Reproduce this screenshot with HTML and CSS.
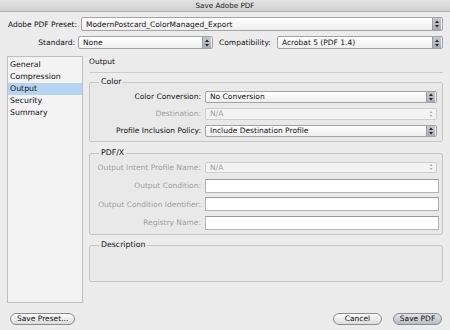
FILE: index.html
```
<!DOCTYPE html>
<html>
<head>
    <title>Save Adobe PDF</title>
    <link rel="stylesheet" href="styles.css">
</head>
<body>
    <div class="titlebar">Save Adobe PDF</div>

    <div class="top">
        <div class="top-row">
            <span class="top-label preset-label">Adobe PDF Preset:</span>
            <div class="popup popup-top grow">
                <span class="popup-text">ModernPostcard_ColorManaged_Export</span>
                <span class="stepper"><svg width="8" height="10" viewBox="0 0 8 10"><path d="M2 4 L4 1.5 L6 4 Z M2 6 L4 8.5 L6 6 Z" fill="#222"/></svg></span>
            </div>
        </div>
        <div class="top-row second">
            <span class="top-label std-label">Standard:</span>
            <div class="popup popup-top std">
                <span class="popup-text">None</span>
                <span class="stepper"><svg width="8" height="10" viewBox="0 0 8 10"><path d="M2 4 L4 1.5 L6 4 Z M2 6 L4 8.5 L6 6 Z" fill="#222"/></svg></span>
            </div>
            <span class="top-label compat-label">Compatibility:</span>
            <div class="popup popup-top grow">
                <span class="popup-text">Acrobat 5 (PDF 1.4)</span>
                <span class="stepper"><svg width="8" height="10" viewBox="0 0 8 10"><path d="M2 4 L4 1.5 L6 4 Z M2 6 L4 8.5 L6 6 Z" fill="#222"/></svg></span>
            </div>
        </div>
    </div>

    <div class="panes">
        <ul class="sidebar">
            <li>General</li>
            <li>Compression</li>
            <li class="selected">Output</li>
            <li>Security</li>
            <li>Summary</li>
        </ul>

        <div class="main">
            <div class="main-title">Output</div>

            <fieldset class="group group-color">
                <legend>Color</legend>
                <div class="field">
                    <span class="field-label">Color Conversion:</span>
                    <div class="popup">
                        <span class="popup-text">No Conversion</span>
                        <span class="stepper"><svg width="8" height="10" viewBox="0 0 8 10"><path d="M2 4 L4 1.5 L6 4 Z M2 6 L4 8.5 L6 6 Z" fill="#222"/></svg></span>
                    </div>
                </div>
                <div class="field disabled">
                    <span class="field-label">Destination:</span>
                    <div class="popup">
                        <span class="popup-text">N/A</span>
                        <span class="stepper"><svg width="8" height="10" viewBox="0 0 8 10"><path d="M2.5 4 L4 2 L5.5 4 Z M2.5 6 L4 8 L5.5 6 Z" fill="#aaa"/></svg></span>
                    </div>
                </div>
                <div class="field">
                    <span class="field-label">Profile Inclusion Policy:</span>
                    <div class="popup">
                        <span class="popup-text">Include Destination Profile</span>
                        <span class="stepper"><svg width="8" height="10" viewBox="0 0 8 10"><path d="M2 4 L4 1.5 L6 4 Z M2 6 L4 8.5 L6 6 Z" fill="#222"/></svg></span>
                    </div>
                </div>
            </fieldset>

            <fieldset class="group group-pdfx">
                <legend>PDF/X</legend>
                <div class="field disabled">
                    <span class="field-label">Output Intent Profile Name:</span>
                    <div class="popup">
                        <span class="popup-text">N/A</span>
                        <span class="stepper"><svg width="8" height="10" viewBox="0 0 8 10"><path d="M2.5 4 L4 2 L5.5 4 Z M2.5 6 L4 8 L5.5 6 Z" fill="#aaa"/></svg></span>
                    </div>
                </div>
                <div class="field disabled">
                    <span class="field-label">Output Condition:</span>
                    <div class="textbox"></div>
                </div>
                <div class="field disabled">
                    <span class="field-label">Output Condition Identifier:</span>
                    <div class="textbox"></div>
                </div>
                <div class="field disabled">
                    <span class="field-label">Registry Name:</span>
                    <div class="textbox"></div>
                </div>
            </fieldset>

            <fieldset class="group group-desc">
                <legend>Description</legend>
            </fieldset>
        </div>
    </div>

    <div class="footer">
        <button class="pill">Save Preset...</button>
        <div class="footer-right">
            <button class="pill cancel">Cancel</button>
            <button class="pill default">Save PDF</button>
        </div>
    </div>
</body>
</html>
```

FILE: styles.css
```
body {
    margin: 0;
    padding: 0;
    background-color: #ececec;
    font-family: "DejaVu Sans", Verdana, sans-serif;
    font-size: 7.5px;
    color: #111;
    width: 450px;
    height: 330px;
    overflow: hidden;
}

.titlebar {
    height: 11px;
    line-height: 11px;
    text-align: center;
    font-size: 7.2px;
    color: #222;
    background: linear-gradient(#e2e2e2, #d0d0d0);
    border-bottom: 1px solid #b4b4b4;
}

/* preset / standard rows */
.top-row {
    display: flex;
    align-items: center;
    margin-top: 5px;
    padding-right: 7px;
    height: 14px;
}

    .top-row.second {
        height: 13px;
    }

.top-label {
    text-align: right;
    white-space: nowrap;
}

.preset-label {
    width: 77px;
    margin-right: 4px;
}

.std-label {
    width: 75px;
    margin-right: 3px;
}

.compat-label {
    margin-left: 6px;
    margin-right: 6px;
}

.std {
    width: 135px;
}

.grow {
    flex: 1;
}

/* popup buttons */
.popup {
    display: flex;
    align-items: center;
    box-sizing: border-box;
    height: 12px;
    border: 1px solid #a4a4a4;
    border-radius: 2px;
    background: linear-gradient(#ffffff, #eeeeee);
    overflow: hidden;
}

.popup-top {
    height: 100%;
}

.popup-text {
    flex: 1;
    padding-left: 4px;
    white-space: nowrap;
}

.stepper {
    width: 8px;
    height: 100%;
    display: flex;
    align-items: center;
    justify-content: center;
    background: linear-gradient(#c4c8ce, #a9aeb6);
    border-left: 1px solid #9a9ea6;
    margin-right: 1px;
}

.disabled .popup {
    border-color: #cfcfcf;
    background: #f3f3f3;
    color: #9c9c9c;
}

    .disabled .popup .stepper {
        background: none;
        border-left: none;
    }

/* panes */
.panes {
    display: flex;
    margin-top: 7px;
    padding-left: 7px;
    height: 247px;
}

.sidebar {
    list-style-type: none;
    margin: 0;
    padding: 2px 0 0 0;
    width: 76px;
    box-sizing: border-box;
    border: 1px solid #bdbdbd;
    background-color: #f3f3f3;
}

    .sidebar li {
        height: 12px;
        line-height: 12px;
        padding-left: 2px;
        font-size: 7.8px;
    }

    .sidebar .selected {
        background-color: #b7d4f2;
    }

.main {
    width: 354px;
    margin-left: 6px;
}

.main-title {
    line-height: 12px;
    padding-bottom: 4px;
    border-bottom: 1px solid #cdcdcd;
}

/* group boxes */
.group {
    margin: 0;
    padding: 0 5px 2px 0;
    border: 1px solid #c6c6c6;
    border-radius: 2px;
    background-color: #e9e9e9;
    min-width: 0;
}

    .group legend {
        margin-left: 9px;
        padding: 0 2px;
        line-height: 10px;
        font-size: 7.8px;
    }

.group-color {
    margin-top: 4px;
    padding-top: 1px;
}

.group-pdfx {
    margin-top: 6px;
}

.group-desc {
    margin-top: 5px;
    min-height: 42px;
    box-sizing: border-box;
}

.field {
    display: grid;
    grid-template-columns: 111px 1fr;
    column-gap: 4px;
    align-items: center;
    height: 17px;
}

.group-pdfx .field {
    height: 18.5px;
}

.field-label {
    text-align: right;
    white-space: nowrap;
}

.disabled .field-label {
    color: #a0a0a0;
}

.group-pdfx .popup {
    height: 11px;
}

.textbox {
    height: 14px;
    box-sizing: border-box;
    margin-right: -2px;
    background-color: #ffffff;
    border: 1px solid #b4b4b4;
    border-top-color: #9a9a9a;
}

/* footer buttons */
.footer {
    display: flex;
    justify-content: space-between;
    margin-top: 10px;
    padding: 0 8px 0 10px;
}

.footer-right {
    display: flex;
    gap: 11px;
}

.pill {
    height: 12px;
    padding: 0 6px;
    font-family: "DejaVu Sans", Verdana, sans-serif;
    font-size: 7.5px;
    line-height: 10px;
    white-space: nowrap;
    color: #111;
    border: 1px solid #8c8c8c;
    border-radius: 7px;
    background: linear-gradient(#fdfdfd, #dcdcdc);
}

.cancel {
    width: 49px;
    padding: 0;
}

.default {
    width: 49px;
    padding: 0;
    background: linear-gradient(#e2e4e8, #b9bdc4);
    border-color: #888c94;
}
```
